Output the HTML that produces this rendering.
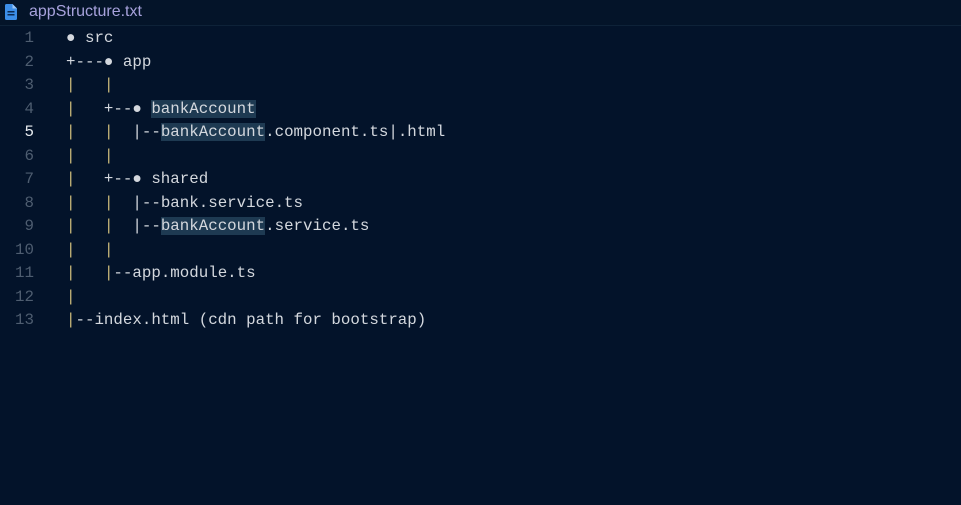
<!DOCTYPE html>
<html><head><meta charset="utf-8"><style>
html,body{margin:0;padding:0;width:961px;height:505px;background:#03132a;overflow:hidden}
.bar{position:absolute;left:0;top:0;width:961px;height:25px;background:#041429;border-bottom:1px solid #0e2238}
.title{position:absolute;left:29px;top:3px;font:16px "Liberation Sans",sans-serif;color:#a7a2dc;letter-spacing:0px}
.code{position:absolute;left:0;top:27px;font-family:"Liberation Mono",monospace;font-size:15.8px;color:#d4d8de}
.ln{position:absolute;left:0;width:34px;text-align:right;color:#4e5d70}
.l{position:absolute;height:23.5px;line-height:23.5px;white-space:pre}
.t{position:absolute;left:66px}
.g{color:#c9b87a}
.h{background:#1e3a52}
</style></head><body>
<div class="bar">
<svg style="position:absolute;left:5px;top:4px" width="12" height="16" viewBox="0 0 12 16"><path d="M0 1.5Q0 0 1.5 0H7.5L12 4.5V14.5Q12 16 10.5 16H1.5Q0 16 0 14.5Z" fill="#3c8ee8"/><path d="M7.5 0V4.5H12" fill="#9cc6f5"/><rect x="2.5" y="7" width="7" height="1.5" fill="#0b2a52"/><rect x="2.5" y="10" width="7" height="1.5" fill="#0b2a52"/></svg>
<div class="title">appStructure.txt</div>
</div>
<div class="code">
<div class="l" style="top:0"><span class="ln">1</span><span class="t">● src</span></div>
<div class="l" style="top:23.5px"><span class="ln">2</span><span class="t">+---● app</span></div>
<div class="l" style="top:47px"><span class="ln">3</span><span class="t"><span class="g">|</span>   <span class="g">|</span></span></div>
<div class="l" style="top:70.5px"><span class="ln">4</span><span class="t"><span class="g">|</span>   +--● <span class="h">bankAccount</span></span></div>
<div class="l" style="top:94px"><span class="ln" style="color:#e8ecf0">5</span><span class="t"><span class="g">|</span>   <span class="g">|</span>  |--<span class="h">bankAccount</span>.component.ts|.html</span></div>
<div class="l" style="top:117.5px"><span class="ln">6</span><span class="t"><span class="g">|</span>   <span class="g">|</span></span></div>
<div class="l" style="top:141px"><span class="ln">7</span><span class="t"><span class="g">|</span>   +--● shared</span></div>
<div class="l" style="top:164.5px"><span class="ln">8</span><span class="t"><span class="g">|</span>   <span class="g">|</span>  |--bank.service.ts</span></div>
<div class="l" style="top:188px"><span class="ln">9</span><span class="t"><span class="g">|</span>   <span class="g">|</span>  |--<span class="h">bankAccount</span>.service.ts</span></div>
<div class="l" style="top:211.5px"><span class="ln">10</span><span class="t"><span class="g">|</span>   <span class="g">|</span></span></div>
<div class="l" style="top:235px"><span class="ln">11</span><span class="t"><span class="g">|</span>   <span class="g">|</span>--app.module.ts</span></div>
<div class="l" style="top:258.5px"><span class="ln">12</span><span class="t"><span class="g">|</span></span></div>
<div class="l" style="top:282px"><span class="ln">13</span><span class="t"><span class="g">|</span>--index.html (cdn path for bootstrap)</span></div>
</div>
</body></html>
